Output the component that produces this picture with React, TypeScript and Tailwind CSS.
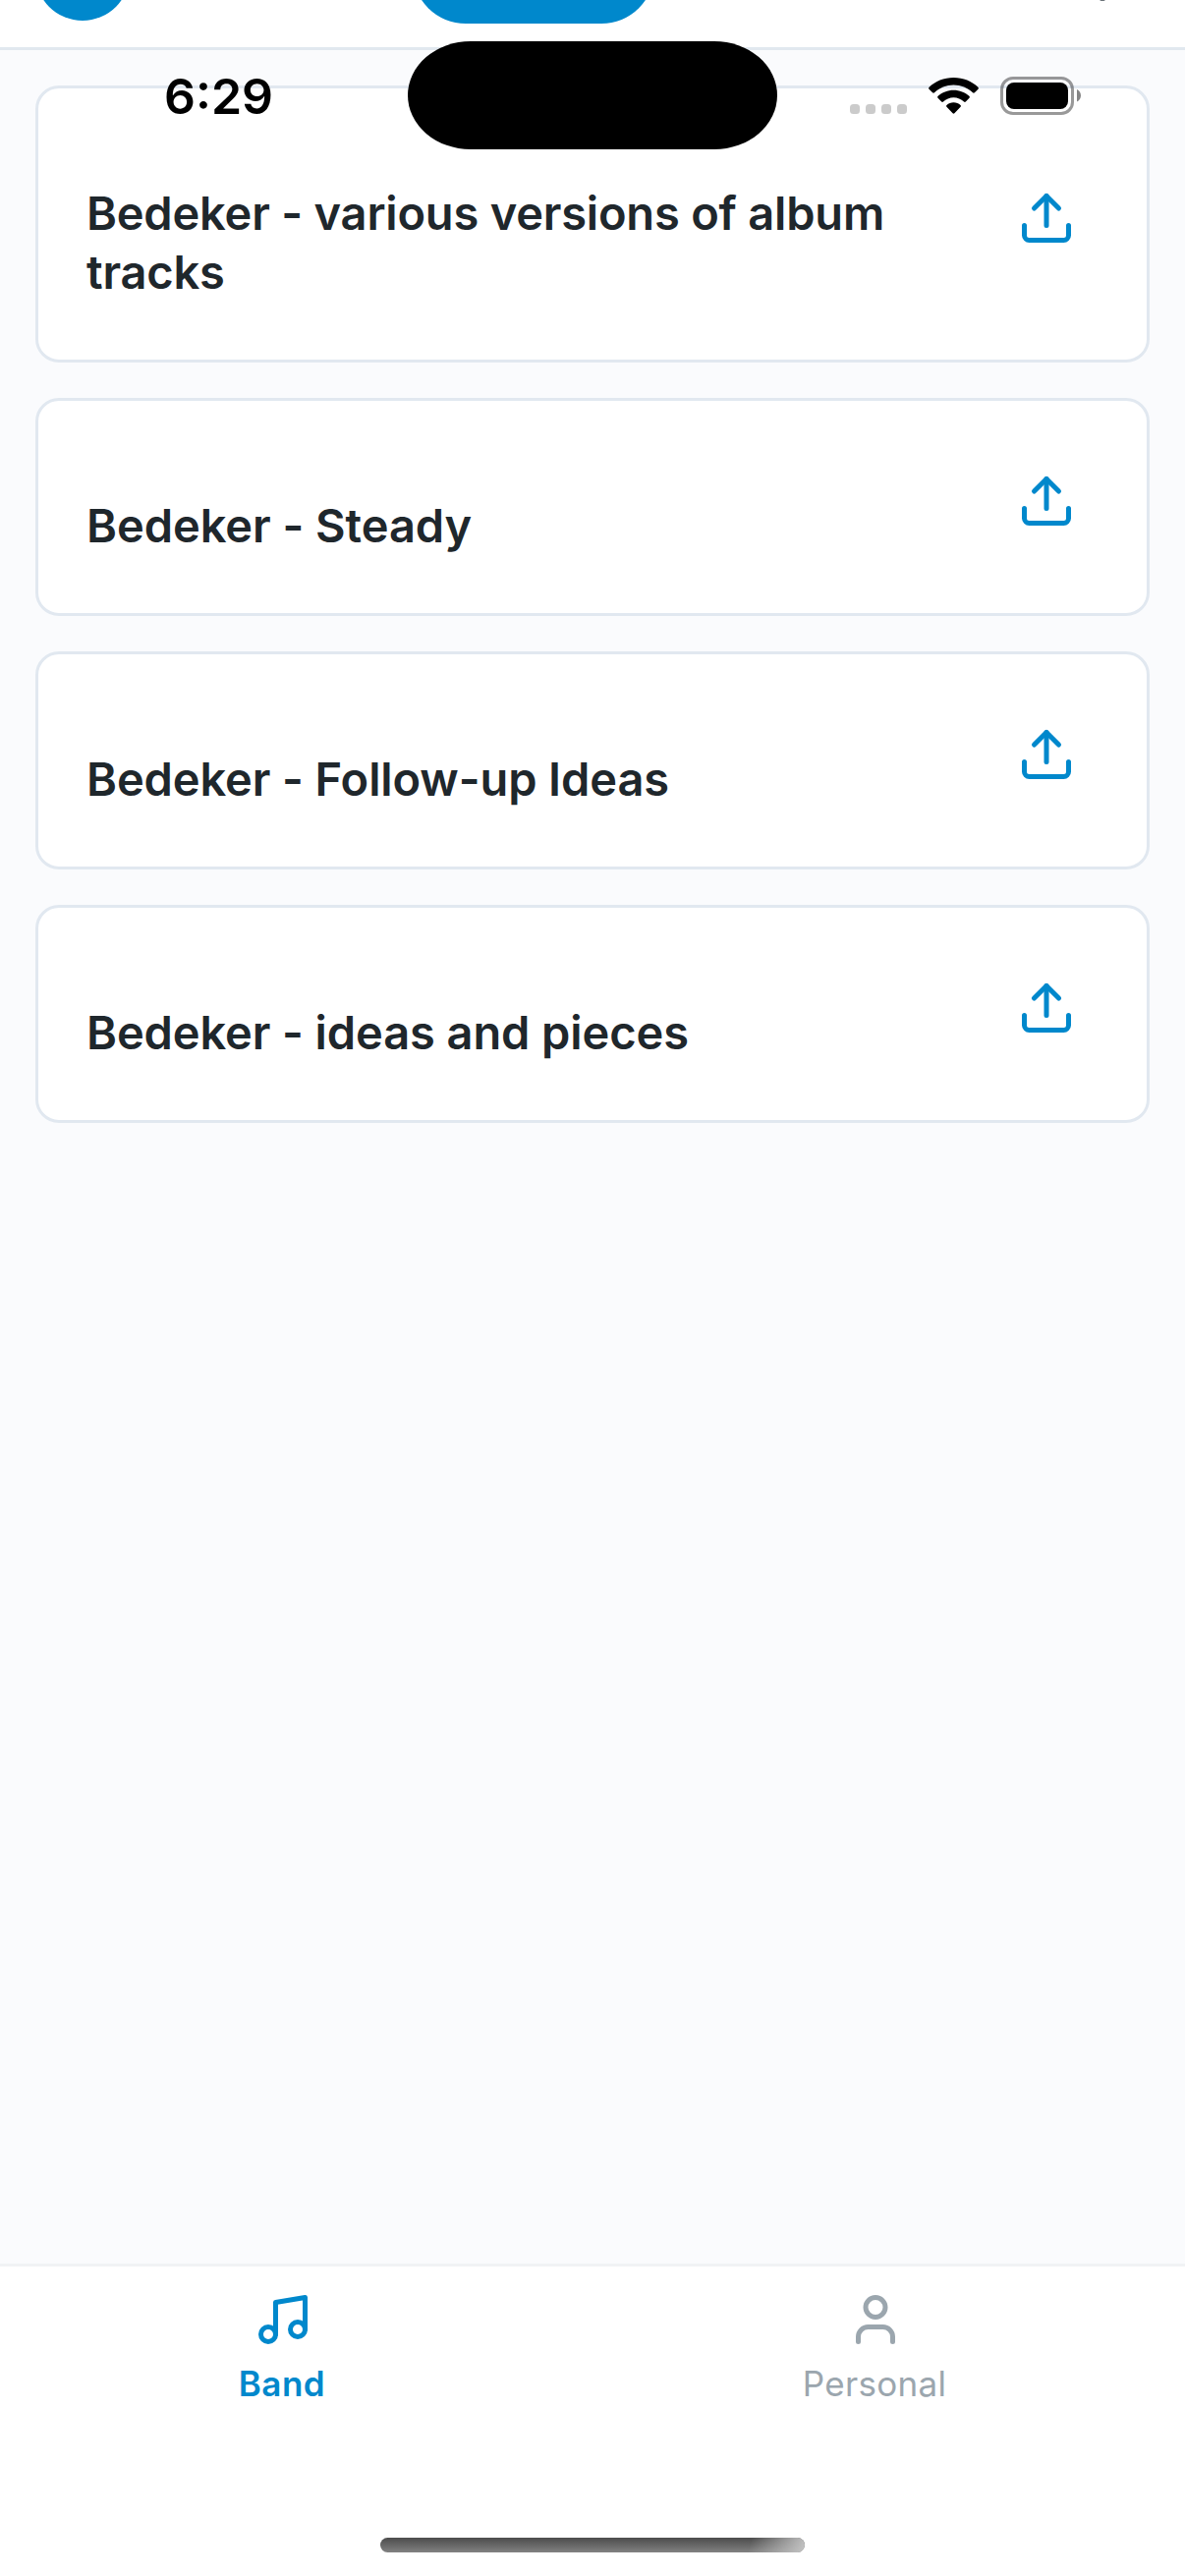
import { Music, Upload, User } from "lucide-react";

const playlists = [
  { title: "Bedeker - various versions of album tracks", tracking: "tracking-[-0.2px]" },
  { title: "Bedeker - Steady", tracking: "tracking-[-0.05px]" },
  { title: "Bedeker - Follow-up Ideas", tracking: "tracking-[-0.1px]" },
  { title: "Bedeker - ideas and pieces", tracking: "tracking-[-0.1px]" },
];

function PlaylistCard({ title, tracking }: { title: string; tracking: string }) {
  return (
    <li className="flex items-center justify-between rounded-[24px] border-[3px] border-[#e1e8f0] bg-white py-12 pl-[49px] pr-[72px]">
      <h2
        className={`w-[860px] pt-[49px] pb-[11px] text-[47px] leading-[60px] font-semibold text-[#1f272c] ${tracking}`}
      >
        {title}
      </h2>
      <button className="pb-3" aria-label="Upload">
        <Upload className="block size-[60px] text-[#0088cc]" strokeWidth={2} />
      </button>
    </li>
  );
}

function StatusBar() {
  return (
    <div className="absolute inset-x-0 top-0 flex h-[194px] justify-between">
      <div className="w-[415px] pt-[67px] pl-[167px] text-[50px] leading-[62px] font-semibold text-black">6:29</div>
      <div className="mt-[42px] h-[110px] w-[376px] rounded-[64px/55px] bg-black" />
      <div className="mt-[78px] flex h-[39px] w-[415px] pl-[74px]">
        <div className="mt-[28px] flex gap-[6px]">
          {[0, 1, 2, 3].map((i) => (
            <span key={i} className="size-[10px] rounded-[3.5px] bg-[#cbcbcb]" />
          ))}
        </div>
        <svg className="mt-[1px] ml-[22px] h-[37px] w-[51px]" viewBox="0 0 51 37">
          <path d="M25.5 0C35.3 0 44.1 3.7 50.4 9.7c.6.6.6 1.4.1 2l-3.6 3.6c-.6.6-1.3.6-1.9 0C39.9 10.500 33 7.600 25.500 7.600S11.100 10.500 6 15.300c-.6.6-1.300.6-1.900 0L.5 11.700c-.5-.6-.5-1.400.1-2C6.900 3.700 15.700 0 25.500 0z" />
          <path d="M25.500 12.700c6.100 0 11.700 2.300 15.900 6.100.6.6.6 1.300.1 1.900l-3.700 3.800c-.5.500-1.200.5-1.800 0-2.800-2.600-6.500-4.200-10.500-4.200s-7.700 1.600-10.500 4.200c-.6.5-1.300.5-1.800 0l-3.700-3.800c-.5-.6-.5-1.300.1-1.900 4.200-3.800 9.800-6.100 15.900-6.100z" />
          <path d="M25.500 25.300c2.700 0 5.200 1 7 2.600.6.500.6 1.200.1 1.800l-6.200 6.500c-.5.600-1.300.6-1.800 0l-6.200-6.500c-.5-.6-.5-1.300.1-1.800 1.800-1.600 4.300-2.600 7-2.600z" />
        </svg>
        <svg className="ml-[22px] h-[39px] w-[83px]" viewBox="0 0 83 39">
          <rect x="1.500" y="1.500" width="72" height="36" rx="11.500" fill="none" stroke="#000" strokeOpacity=".4" strokeWidth="3" />
          <rect x="6" y="6" width="63" height="27" rx="8" />
          <path d="M78 13c2.400 1 4 3.500 4 6.200s-1.600 5.200-4 6.200z" fillOpacity=".48" />
        </svg>
      </div>
    </div>
  );
}

export default function App() {
  return (
    <div className="relative flex h-[2622px] w-[1206px] flex-col overflow-hidden bg-[#fafbfd] font-['Inter',sans-serif]">
      <header className="flex h-[51px] shrink-0 items-end overflow-hidden border-b-[3px] border-[#e1e8ef] bg-white pl-9">
        <div className="mb-[27px] size-24 shrink-0 rounded-full bg-[#0088cc]" />
        <div className="mb-6 ml-[288px] h-[108px] w-[246px] shrink-0 rounded-full bg-[#0088cc]" />
        <svg className="mb-[47px] ml-[453px] h-px w-[6px]" viewBox="0 0 6 1">
          <path d="M0 0h6L4.500 1h-3z" fill="#687076" />
        </svg>
      </header>

      <main className="flex-1 px-9 pt-9">
        <ul className="flex flex-col gap-9">
          {playlists.map((playlist) => (
            <PlaylistCard key={playlist.title} {...playlist} />
          ))}
        </ul>
      </main>

      <nav className="flex h-[318px] shrink-0 border-t-[3px] border-[#f1f3f5] bg-white pt-6">
        <button className="flex h-fit flex-1 flex-col items-center pr-[27px] text-[#0088cc]">
          <Music className="size-[60px]" strokeWidth={2} />
          <span className="mt-[13px] pr-[2px] text-[35px] leading-[44px] font-semibold tracking-[0.5px]">Band</span>
        </button>
        <button className="flex h-fit flex-1 flex-col items-center pr-[27px] text-[#9ba6ae]">
          <User className="size-[60px]" strokeWidth={2} />
          <span className="mt-[13px] pr-[2px] text-[35px] leading-[44px] tracking-[0.3px]">Personal</span>
        </button>
      </nav>

      <StatusBar />
      <div className="absolute bottom-6 left-[387px] h-[15px] w-[432px] overflow-hidden rounded-full bg-linear-to-b from-[#4c4c4c] to-[#828282]">
        <div className="ml-auto h-full w-[64px] bg-[linear-gradient(105deg,transparent_15%,#c4c4c4_100%)]" />
      </div>
    </div>
  );
}
